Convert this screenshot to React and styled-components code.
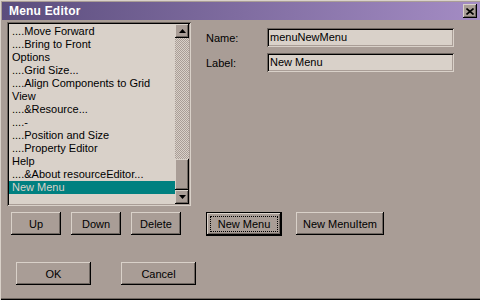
import React from 'react';
import styled, { createGlobalStyle, css } from 'styled-components';

const C = {
  face: '#a99d96',
  light: '#d9d1c9',
  shadow: '#6e6660',
  dark: '#000000',
  field: '#d9d1c9',
  teal: '#008080',
};

const Global = createGlobalStyle`
  html, body { margin: 0; padding: 0; background: ${C.face}; }
  body { font-family: "Liberation Sans", Arial, sans-serif; font-size: 11px; color: #000; }
  * { box-sizing: border-box; }
`;

const raised = css`
  box-shadow: inset -1px -1px ${C.dark}, inset 1px 1px ${C.light}, inset -2px -2px ${C.shadow};
`;
const sunken = css`
  box-shadow: inset 1px 1px ${C.shadow}, inset -1px -1px ${C.light}, inset 2px 2px ${C.dark}, inset -2px -2px ${C.face};
`;

const Window = styled.div`
  width: 480px;
  height: 300px;
  padding: 2px 0 2px 2px;
  background: ${C.face};
  box-shadow: inset 1px 1px ${C.light}, inset 0 -1px ${C.dark}, inset 0 -2px ${C.shadow};
  display: flex;
  flex-direction: column;
  overflow: hidden;
`;

const TitleBar = styled.div`
  height: 18px;
  flex: none;
  display: flex;
  align-items: center;
  justify-content: space-between;
  padding: 0 3px 0 7px;
  background: linear-gradient(to right, #5b4d7d, #a48cc4);
`;

const Title = styled.span`
  font-family: "Liberation Sans", Arial, sans-serif;
  font-weight: bold;
  font-size: 12px;
  color: #fff;
  letter-spacing: 0.2px;
`;

const CloseButton = styled.div`
  width: 14px;
  height: 14px;
  background: ${C.face};
  ${raised};
  display: flex;
  align-items: center;
  justify-content: center;
`;

const Body = styled.div`
  flex: 1;
  display: flex;
  flex-direction: column;
  padding: 2px 0 0 5px;
`;

const MainRow = styled.div`
  display: flex;
  align-items: flex-start;
`;

const ListBox = styled.div`
  width: 184px;
  height: 184px;
  padding: 2px;
  background: ${C.field};
  ${sunken};
  display: flex;
`;

const Items = styled.div`
  flex: 1;
  padding-top: 1px;
  display: flex;
  flex-direction: column;
`;

const Item = styled.div`
  height: 13px;
  line-height: 13px;
  padding-left: 3px;
  white-space: nowrap;
  background: ${(p) => (p.$selected ? C.teal : 'transparent')};
  color: ${(p) => (p.$selected ? C.light : '#000')};
`;

const ScrollBar = styled.div`
  width: 14px;
  display: flex;
  flex-direction: column;
`;

const ScrollButton = styled.div`
  width: 14px;
  height: 14px;
  flex: none;
  background: ${C.face};
  ${raised};
  display: flex;
  align-items: center;
  justify-content: center;
`;

const Track = styled.div`
  flex: 1;
  display: flex;
  flex-direction: column;
  justify-content: flex-end;
  background-color: ${C.light};
  background-image: conic-gradient(${C.face} 25%, ${C.light} 0 50%, ${C.face} 0 75%, ${C.light} 0);
  background-size: 2px 2px;
`;

const Thumb = styled.div`
  height: 31px;
  background: ${C.face};
  ${raised};
`;

const Form = styled.div`
  margin-left: 15px;
  padding-top: 6px;
  display: flex;
  flex-direction: column;
  gap: 6px;
`;

const FieldRow = styled.div`
  display: flex;
  align-items: center;
`;

const FieldLabel = styled.span`
  width: 61px;
`;

const Input = styled.div`
  width: 187px;
  height: 19px;
  padding: 0 3px;
  line-height: 19px;
  background: ${C.field};
  ${sunken};
`;

const ButtonRow = styled.div`
  display: flex;
  align-items: flex-start;
  margin-top: ${(p) => p.$top}px;
  padding-left: ${(p) => p.$left}px;
  gap: ${(p) => p.$gap}px;
`;

const Button = styled.div`
  width: ${(p) => p.$w}px;
  height: 23px;
  margin-left: ${(p) => p.$ml || 0}px;
  background: ${C.face};
  ${raised};
  display: flex;
  align-items: center;
  justify-content: center;
  white-space: nowrap;
`;

const DefaultButton = styled.div`
  width: ${(p) => p.$w}px;
  height: 24px;
  margin-left: ${(p) => p.$ml || 0}px;
  background: ${C.face};
  border: 1px solid #000;
  ${raised};
  padding: 3px;
  display: flex;
  white-space: nowrap;
`;

const FocusLabel = styled.span`
  flex: 1;
  border: 1px dotted #000;
  display: flex;
  align-items: center;
  justify-content: center;
`;

const Arrow = ({ up }) => (
  <svg width="7" height="4" viewBox="0 0 7 4">
    <path d={up ? 'M3.5 0 L7 4 L0 4 Z' : 'M0 0 L7 0 L3.5 4 Z'} fill="#000" />
  </svg>
);

const items = [
  '....Move Forward',
  '....Bring to Front',
  'Options',
  '....Grid Size...',
  '....Align Components to Grid',
  'View',
  '....&Resource...',
  '....-',
  '....Position and Size',
  '....Property Editor',
  'Help',
  '....&About resourceEditor...',
  'New Menu',
];

export default function App() {
  return (
    <>
      <Global />
      <Window>
        <TitleBar>
          <Title>Menu Editor</Title>
          <CloseButton>
            <svg width="8" height="7" viewBox="0 0 8 7">
              <path d="M0.5 0.5 L7.5 6.5 M7.5 0.5 L0.5 6.5" stroke="#000" strokeWidth="1.6" />
            </svg>
          </CloseButton>
        </TitleBar>
        <Body>
          <MainRow>
            <ListBox>
              <Items>
                {items.map((t, i) => (
                  <Item key={i} $selected={i === items.length - 1}>{t}</Item>
                ))}
              </Items>
              <ScrollBar>
                <ScrollButton><Arrow up /></ScrollButton>
                <Track><Thumb /></Track>
                <ScrollButton><Arrow /></ScrollButton>
              </ScrollBar>
            </ListBox>
            <Form>
              <FieldRow>
                <FieldLabel>Name:</FieldLabel>
                <Input>menuNewMenu</Input>
              </FieldRow>
              <FieldRow>
                <FieldLabel>Label:</FieldLabel>
                <Input>New Menu</Input>
              </FieldRow>
            </Form>
          </MainRow>
          <ButtonRow $top={6} $left={4} $gap={10}>
            <Button $w={50}>Up</Button>
            <Button $w={50}>Down</Button>
            <Button $w={50}>Delete</Button>
            <DefaultButton $w={76} $ml={15}>
              <FocusLabel>New Menu</FocusLabel>
            </DefaultButton>
            <Button $w={88} $ml={4}>New MenuItem</Button>
          </ButtonRow>
          <ButtonRow $top={26} $left={9} $gap={30}>
            <Button $w={75}>OK</Button>
            <Button $w={75}>Cancel</Button>
          </ButtonRow>
        </Body>
      </Window>
    </>
  );
}
